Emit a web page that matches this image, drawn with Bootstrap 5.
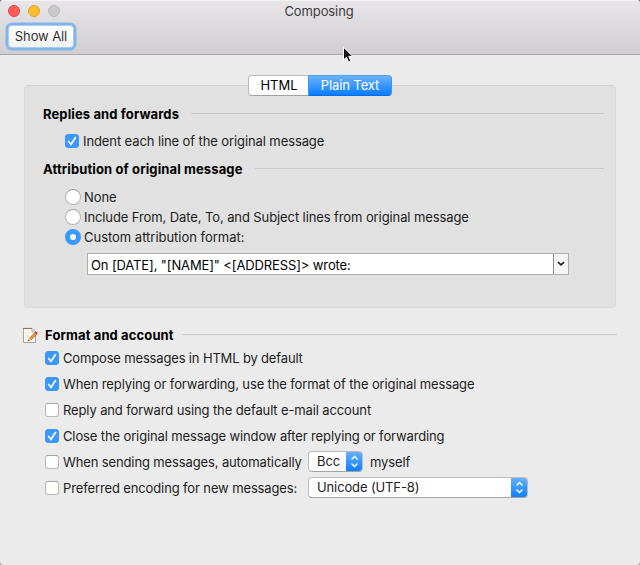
<!DOCTYPE html>
<html lang="en">
<head>
<meta charset="utf-8">
<meta name="viewport" content="width=device-width, initial-scale=1">
<title>Composing</title>
<link href="https://cdn.jsdelivr.net/npm/bootstrap@5.3.0/dist/css/bootstrap.min.css" rel="stylesheet">
<style>
html{background:#8a8784}
body{font:13px/20px Inter,"Helvetica Neue",sans-serif;letter-spacing:-.1px;color:#1d1d1d;background:transparent;width:640px;height:565px;overflow:hidden;white-space:nowrap}
.window{height:565px;background:#ebebeb;border-radius:4px 4px 3px 3px;overflow:hidden}
.titlebar{height:55px;border-bottom:1px solid #a9a8a9;background:linear-gradient(#e9e6e9,#d1ced1);box-shadow:inset 0 1px #f5f4f5;color:#3c3c3c}
.lights{left:8px;top:5px;gap:8px}
.light{width:12px;height:12px;border:1px solid #b9b9b9;background:#cbcbcb}
.light.close-dot{background:#ff5c57;border-color:#e2443f}
.light.min-dot{background:#ffbd2e;border-color:#e0a023}
.caption-text{height:22px;padding:1px 2px 0 0}
.show-all{margin:4px 0 0 9px;width:64px;height:21px;background:linear-gradient(#fff,#f3f3f3);border:0;border-radius:3px;box-shadow:0 0 0 1px #a8cdf4,0 0 0 3.5px #84b5ea;font-size:13px;line-height:20px;color:#333;letter-spacing:inherit}
.cursor-arrow{left:342px;top:46px}
.tabs{margin:20px auto -11px;width:144px;height:21px;z-index:1}
.tabs .btn{font-size:13px;line-height:19px;padding:0;border:1px solid #b9b9b9;border-bottom-color:#a2a2a2;border-radius:4px;background:#fff;color:#000;letter-spacing:0}
.tabs .tab-html{flex:0 0 61px;border-right:0}
.tabs .tab-plain{background:linear-gradient(#6cb3fa,#087dff);border-color:#55a3f5 #3994f6 #0a6be4;color:#fff;letter-spacing:-.1px}
.panel{margin:0 24px;height:223px;background:#e1e1e1;border:1px solid #dadada;border-top-color:#d2d2d2;border-radius:4px;padding:18px 11px 0 18px}
.heading{height:20px;font-weight:700;color:#000;letter-spacing:.12px}
.rule{height:1px;background:#c9c9c9;margin-top:-1px}
.choice{height:20px}
.box{width:14px;height:14px;border:1px solid #b8b8b8;border-top-color:#a5a5a5;border-radius:3px;background:#fff;flex:none}
.box.on{border-color:#3b97f8;background:#3b99fc}
.box svg{display:block;margin:-1px}
.dot{width:16px;height:16px;border-radius:50%;border:1px solid #b4b4b4;border-top-color:#a2a2a2;background:#fff;flex:none}
.dot.on{border:5px solid #3b99fc}
.combo{margin:6px 0 0 44px;width:482px;height:22px;border:1px solid #adadad;background:#fff;color:#000}
.combo-text{padding:1px 0 0 3px;letter-spacing:-.12px}
.combo-arrow{width:15px;border-left:1px solid #8a8a8a;background:#f6f6f6}
.account{margin:17px 23px 0 22px}
.account .options{padding-left:23px;letter-spacing:-.125px}
.option{height:26px}
.option .box{margin-right:4px}
.popup{height:21px;margin-top:-1px;border:1px solid #bdbdbd;border-bottom-color:#a3a3a3;border-radius:4px;background:#fff;padding-left:8px;line-height:19px;color:#222;overflow:hidden}
.stepper{width:17px;margin:-1px;height:21px;background:linear-gradient(#6cb3fa,#087dff)}
</style>
</head>
<body>
<div class="window position-relative">
  <header class="titlebar">
    <div class="lights position-absolute d-flex">
      <span class="light close-dot rounded-circle"></span><span class="light min-dot rounded-circle"></span><span class="light rounded-circle"></span>
    </div>
    <div class="caption-text text-center">Composing</div>
    <button class="show-all d-flex justify-content-center p-0">Show All</button>
  </header>
  <svg class="cursor-arrow position-absolute" width="12" height="18" viewBox="0 0 12 18"><path d="M1.5 1.2V14l3-2.8 2.1 5 2.3-1-2.1-4.8h4z" fill="#111" stroke="#fff"/></svg>

  <div class="tabs btn-group d-flex position-relative">
    <button class="btn tab-html">HTML</button>
    <button class="btn tab-plain">Plain Text</button>
  </div>
  <section class="panel">
    <div class="heading d-flex align-items-center"><span>Replies and forwards</span><span class="rule flex-fill" style="margin-left:12px"></span></div>
    <div class="choice d-flex align-items-center" style="margin:7px 0 8px 22px"><span class="box on"><svg width="14" height="14" viewBox="0 0 14 14"><path d="M3.6 7.4 6 10.3 10.5 3.5" fill="none" stroke="#fff" stroke-width="1.6" stroke-linecap="round"/></svg></span><span class="ms-1">Indent each line of the original message</span></div>
    <div class="heading d-flex align-items-center"><span>Attribution of original message</span><span class="rule flex-fill" style="margin-left:12px"></span></div>
    <div style="margin:8px 0 0 22px">
      <div class="choice d-flex align-items-center"><span class="dot"></span><span style="margin-left:3px">None</span></div>
      <div class="choice d-flex align-items-center"><span class="dot"></span><span style="margin-left:3px">Include From, Date, To, and Subject lines from original message</span></div>
      <div class="choice d-flex align-items-center"><span class="dot on"></span><span style="margin-left:3px;letter-spacing:-.02px">Custom attribution format:</span></div>
    </div>
    <div class="combo d-flex">
      <span class="combo-text flex-fill">On [DATE], "[NAME]" &lt;[ADDRESS]&gt; wrote:</span>
      <span class="combo-arrow d-flex align-items-center justify-content-center"><svg width="8" height="6" viewBox="0 0 8 6"><path d="M1 1.2 4 3.8 7 1.2" fill="none" stroke="#222" stroke-width="1.7"/></svg></span>
    </div>
  </section>

  <section class="account">
    <div class="heading d-flex align-items-center">
      <svg width="17" height="18" viewBox="0 0 17 18" style="margin-right:6px;flex:none"><path d="M1.5 2.5H10L13.5 6v10.5h-12z" fill="#fafaf6" stroke="#a5a5a0"/><path d="M1 2.5h9" stroke="#8d7a5c" stroke-width="1.2"/><path d="M10 2.5V6h3.5" fill="#ddd" stroke="#aaa" stroke-width=".7"/><path d="M3.5 7h5M3.5 9.5h4M3.5 12h2" stroke="#e6e5df"/><path d="m6.4 14.6 1-2.6 5.4-5.2 1.8 1.8-5.5 5.3z" fill="#f29a2e" stroke="#a95b18" stroke-width=".6"/><path d="m12.2 6.8 1-1.2c.8-.8 3.2 1 2.2 2.2l-1.1 1.1z" fill="#d94d38"/><path d="m6.2 14.9 1-2.7 1.8 1.8z" fill="#e9cf9c"/><path d="m5.8 15.3.5-1.3.8.9z" fill="#222"/></svg>
      <span>Format and account</span><span class="rule flex-fill" style="margin-left:8px"></span></div>
    <div class="options">
      <div class="option d-flex align-items-center"><span class="box on"><svg width="14" height="14" viewBox="0 0 14 14"><path d="M3.6 7.4 6 10.3 10.5 3.5" fill="none" stroke="#fff" stroke-width="1.6" stroke-linecap="round"/></svg></span><span style="letter-spacing:-.16px">Compose messages in HTML by default</span></div>
      <div class="option d-flex align-items-center"><span class="box on"><svg width="14" height="14" viewBox="0 0 14 14"><path d="M3.6 7.4 6 10.3 10.5 3.5" fill="none" stroke="#fff" stroke-width="1.6" stroke-linecap="round"/></svg></span><span>When replying or forwarding, use the format of the original message</span></div>
      <div class="option d-flex align-items-center"><span class="box"></span><span>Reply and forward using the default e-mail account</span></div>
      <div class="option d-flex align-items-center"><span class="box on"><svg width="14" height="14" viewBox="0 0 14 14"><path d="M3.6 7.4 6 10.3 10.5 3.5" fill="none" stroke="#fff" stroke-width="1.6" stroke-linecap="round"/></svg></span><span>Close the original message window after replying or forwarding</span></div>
      <div class="option d-flex align-items-center"><span class="box"></span><span style="width:245px">When sending messages, automatically</span>
        <span class="popup d-flex justify-content-between" style="width:55px"><span>Bcc</span><span class="stepper d-flex align-items-center justify-content-center"><svg width="9" height="13" viewBox="0 0 9 13"><path d="M1.5 4.5l3-3 3 3M1.5 8.5l3 3 3-3" fill="none" stroke="#fff" stroke-width="1.4"/></svg></span></span><span style="margin-left:7px">myself</span></div>
      <div class="option d-flex align-items-center"><span class="box"></span><span style="width:245px">Preferred encoding for new messages:</span>
        <span class="popup d-flex justify-content-between" style="width:220px"><span>Unicode (UTF-8)</span><span class="stepper d-flex align-items-center justify-content-center"><svg width="9" height="13" viewBox="0 0 9 13"><path d="M1.5 4.5l3-3 3 3M1.5 8.5l3 3 3-3" fill="none" stroke="#fff" stroke-width="1.4"/></svg></span></span></div>
    </div>
  </section>
</div>
<script src="https://cdn.jsdelivr.net/npm/bootstrap@5.3.0/dist/js/bootstrap.bundle.min.js"></script>
</body>
</html>
